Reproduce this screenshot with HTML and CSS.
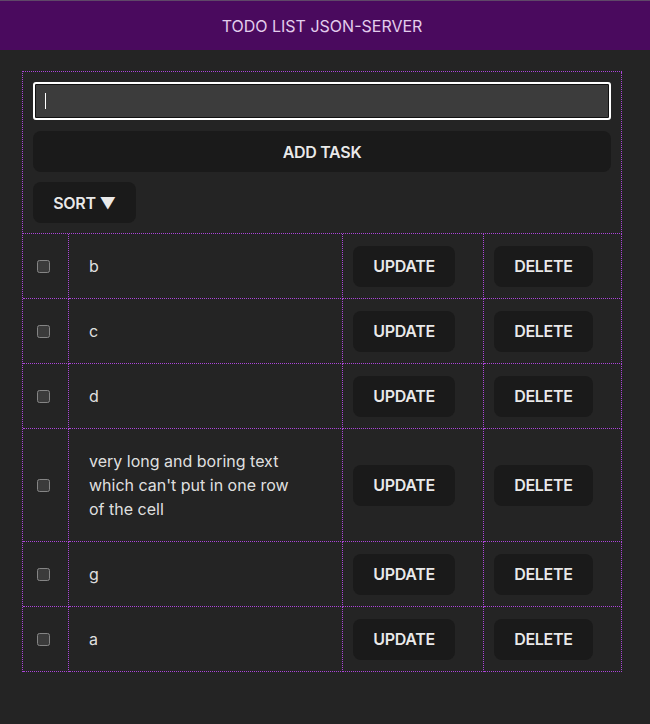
FILE: index.html
```html
<!DOCTYPE html>
<html lang="en">
<head>
<meta charset="utf-8">
<title>Todo list</title>
<link rel="stylesheet" href="styles.css">
</head>
<body>
<header class="header">TODO LIST JSON-SERVER</header>
<main class="main">
  <table class="todo-table">
    <colgroup>
      <col class="col-check">
      <col class="col-text">
      <col class="col-update">
      <col class="col-delete">
    </colgroup>
    <thead>
      <tr>
        <td colspan="4" class="form-cell">
          <div class="form">
            <div class="input-wrap"><input class="task-input" type="text" aria-label="New task"></div>
            <button class="btn btn-wide" type="button">ADD TASK</button>
            <button class="btn" type="button">SORT ▼</button>
          </div>
        </td>
      </tr>
    </thead>
    <tbody>
      <tr>
        <td class="check-cell"><input class="check" type="checkbox"></td>
        <td class="text-cell">b</td>
        <td class="btn-cell"><button class="btn" type="button">UPDATE</button></td>
        <td class="btn-cell"><button class="btn" type="button">DELETE</button></td>
      </tr>
      <tr>
        <td class="check-cell"><input class="check" type="checkbox"></td>
        <td class="text-cell">c</td>
        <td class="btn-cell"><button class="btn" type="button">UPDATE</button></td>
        <td class="btn-cell"><button class="btn" type="button">DELETE</button></td>
      </tr>
      <tr>
        <td class="check-cell"><input class="check" type="checkbox"></td>
        <td class="text-cell">d</td>
        <td class="btn-cell"><button class="btn" type="button">UPDATE</button></td>
        <td class="btn-cell"><button class="btn" type="button">DELETE</button></td>
      </tr>
      <tr>
        <td class="check-cell"><input class="check" type="checkbox"></td>
        <td class="text-cell"><div class="text-limit">very long and boring text which can't put in one row of the cell</div></td>
        <td class="btn-cell"><button class="btn" type="button">UPDATE</button></td>
        <td class="btn-cell"><button class="btn" type="button">DELETE</button></td>
      </tr>
      <tr>
        <td class="check-cell"><input class="check" type="checkbox"></td>
        <td class="text-cell">g</td>
        <td class="btn-cell"><button class="btn" type="button">UPDATE</button></td>
        <td class="btn-cell"><button class="btn" type="button">DELETE</button></td>
      </tr>
      <tr>
        <td class="check-cell"><input class="check" type="checkbox"></td>
        <td class="text-cell">a</td>
        <td class="btn-cell"><button class="btn" type="button">UPDATE</button></td>
        <td class="btn-cell"><button class="btn" type="button">DELETE</button></td>
      </tr>
    </tbody>
  </table>
</main>
</body>
</html>
```
FILE: styles.css
```css
:root {
  color-scheme: dark;
  font-family: Inter, "Noto Sans", sans-serif;
  line-height: 1.5;
  font-weight: 400;
  color: rgba(255, 255, 255, 0.87);
  background-color: #242424;
}

body {
  margin: 0;
  min-height: 724px;
  background-color: #242424;
}

.header {
  height: 49px;
  border-top: 1px solid #5f4868;
  background: #4a0a5e;
  color: #e3cdec;
  font-size: 16px;
  display: flex;
  align-items: center;
  justify-content: center;
  padding-right: 6px;
}

.main {
  padding: 21px 0 0 22px;
}

.todo-table {
  width: 600px;
  table-layout: fixed;
  border-collapse: separate;
  border-spacing: 0;
  border-top: 1px dotted #ab45d8;
  border-left: 1px dotted #ab45d8;
}

.col-check { width: 46px; }
.col-text { width: 274px; }
.col-update { width: 141px; }
.col-delete { width: 138px; }

.todo-table td {
  border-right: 1px dotted #ab45d8;
  border-bottom: 1px dotted #ab45d8;
  padding: 10px;
  vertical-align: middle;
}

.form {
  display: flex;
  flex-direction: column;
  align-items: flex-start;
  gap: 10px;
}

.input-wrap {
  position: relative;
  align-self: stretch;
  margin-bottom: 1px;
}

.input-wrap::after {
  content: "";
  position: absolute;
  left: 12px;
  top: 11px;
  width: 1px;
  height: 16px;
  background: #ffffff;
}

.task-input {
  display: block;
  box-sizing: border-box;
  width: 100%;
  height: 38px;
  margin: 0;
  border: 2px solid #ffffff;
  border-radius: 3px;
  box-shadow: inset 0 0 0 1px #111111;
  background: #3c3c3c;
  color: #ffffff;
  font-family: inherit;
  font-size: 16px;
  outline: none;
}

.btn {
  border-radius: 8px;
  border: 1px solid transparent;
  padding: 0.6em 1.2em;
  font-size: 16px;
  font-weight: 560;
  letter-spacing: -0.3px;
  font-family: Inter, "Noto Sans", sans-serif;
  line-height: normal;
  background-color: #1a1a1a;
  color: rgba(255, 255, 255, 0.92);
  cursor: pointer;
}

.btn-wide {
  align-self: stretch;
}

.check {
  display: block;
  width: 13px;
  height: 13px;
  margin: 3px 3px 3px 4px;
}

.todo-table td.text-cell {
  padding: 20px;
  font-size: 16px;
  line-height: 24px;
}

.text-limit {
  max-width: 212px;
}
```
